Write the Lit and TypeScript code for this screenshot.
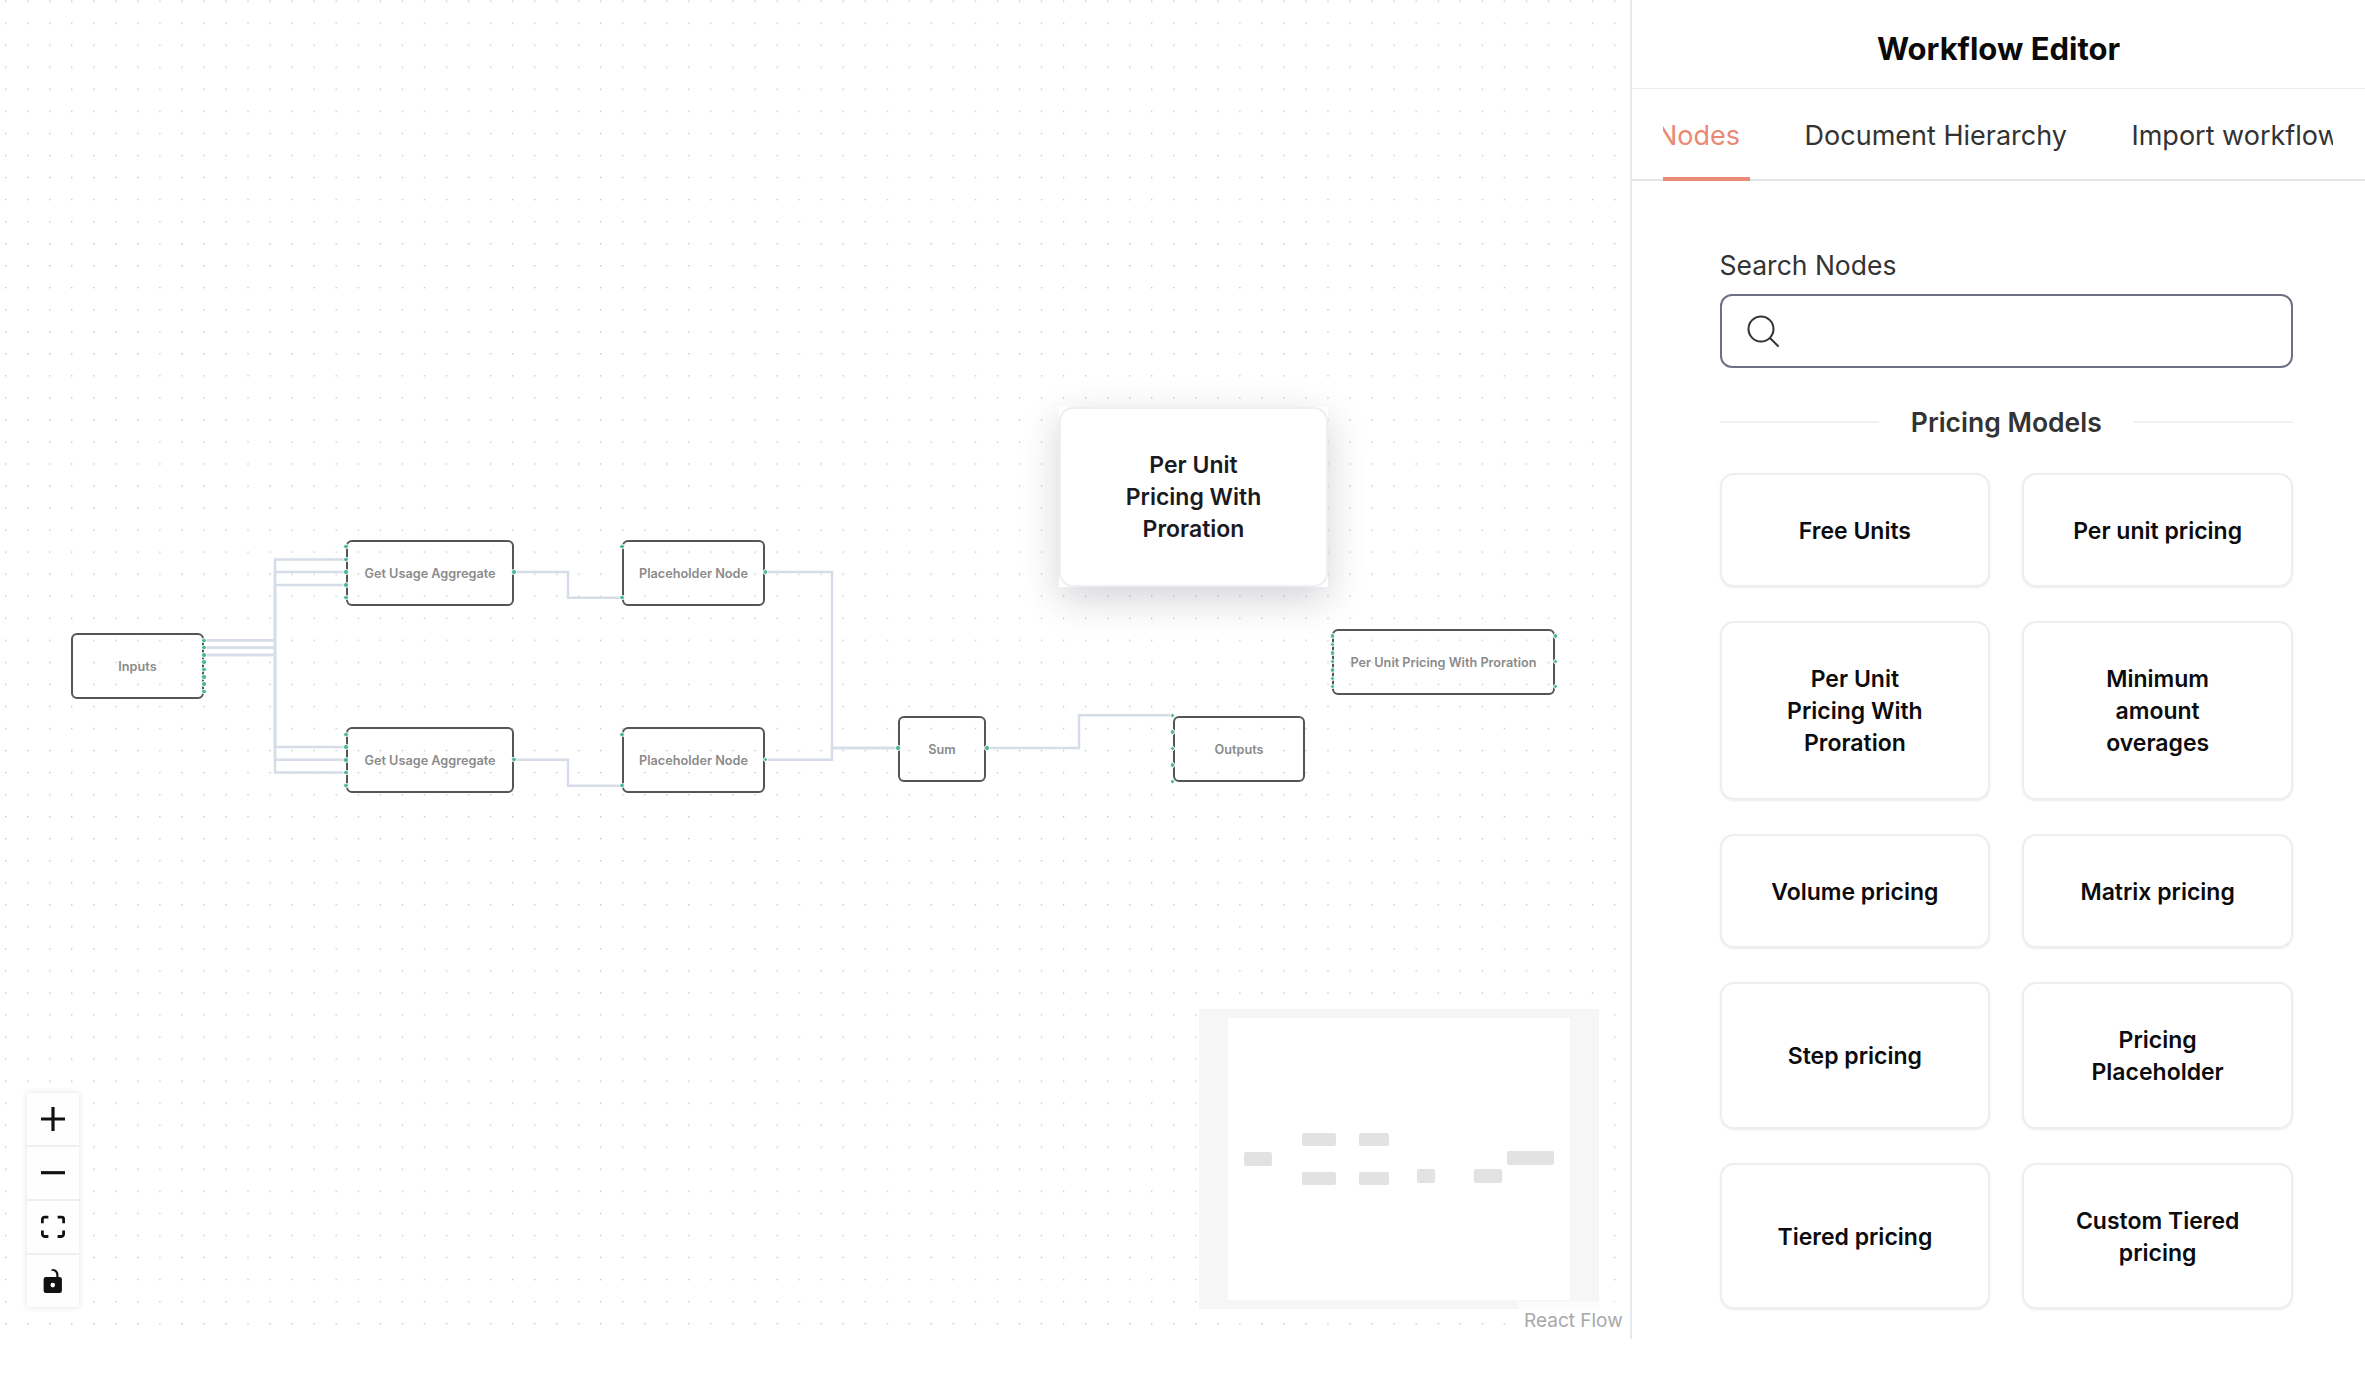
import { LitElement, html, css, svg } from "lit";
import { customElement } from "lit/decorators.js";

type N = { label: string; x: number; y: number; w: number; h: number; handles: [number, number][]; mini: [number, number, number, number] };

const range = (start: number, step: number, n: number) => Array.from({ length: n }, (_, i) => start + i * step);
const column = (x: number, ys: number[]) => ys.map((y) => [x, y] as [number, number]);

const NODES: N[] = [
  { label: "Inputs", x: 71, y: 633, w: 133, h: 66, handles: column(204, range(640.3, 7.3, 8)), mini: [1244, 1152, 28, 14] },
  { label: "Get Usage Aggregate", x: 346, y: 540, w: 168, h: 66, handles: [...column(346, range(546.7, 12.75, 5)), [514, 572]], mini: [1302, 1133, 34, 13] },
  { label: "Placeholder Node", x: 622, y: 540, w: 143, h: 66, handles: [[622, 546.7], [622, 597.7], [765.5, 572]], mini: [1359, 1133, 30, 13] },
  { label: "Get Usage Aggregate", x: 346, y: 727, w: 168, h: 66, handles: [...column(346, range(734.3, 12.75, 5)), [514, 759.7]], mini: [1302, 1172, 34, 13] },
  { label: "Placeholder Node", x: 622, y: 727, w: 143, h: 66, handles: [[622, 734.7], [622, 785.7], [765.5, 759.7]], mini: [1359, 1172, 30, 13] },
  { label: "Sum", x: 898, y: 716, w: 88, h: 66, handles: [[898, 748], [987, 748]], mini: [1417, 1169, 18, 14] },
  { label: "Outputs", x: 1173, y: 716, w: 132, h: 66, handles: column(1172.5, range(715.3, 16.6, 5)), mini: [1474, 1169, 28, 14] },
  { label: "Per Unit Pricing With Proration", x: 1332, y: 629, w: 223, h: 66, handles: [...column(1332.5, range(636, 8.45, 7)), ...column(1555.5, [636, 661.7, 686.7])], mini: [1507, 1151, 47, 14] },
];

const EDGES = [
  "M204 640.3H275V572H346", "M204 647.7H275V559.5H346", "M204 655H275V585H346",
  "M204 640.3H275V747H346", "M204 647.7H275V759.7H346", "M204 655H275V772.4H346",
  "M514 572H568V597.7H622", "M514 759.7H568V785.7H622",
  "M765 572H832V748H898", "M765 759.7H832V748H898",
  "M987 748H1079V715.3H1172",
];

const CARDS = [
  ["Free Units"], ["Per unit pricing"],
  ["Per Unit", "Pricing With", "Proration"], ["Minimum", "amount", "overages"],
  ["Volume pricing"], ["Matrix pricing"],
  ["Step pricing"], ["Pricing", "Placeholder"],
  ["Tiered pricing"], ["Custom Tiered", "pricing"],
];

const lines = (parts: string[]) => parts.map((p, i) => (i ? html`<br />${p}` : p));

@customElement("app-root")
export class AppRoot extends LitElement {
  static styles = css`
    :host { display: block; font-family: Inter, "Liberation Sans", sans-serif; background: #fff; height: 1399px; overflow: hidden; }
    .app { display: flex; height: 1339px; }
    .canvas { position: relative; width: 1630px; flex: none; overflow: hidden; background: #fff; }
    .layer { position: absolute; left: 0; top: 0; width: 100%; height: 100%; }
    .edge { fill: none; stroke: #d6dde8; stroke-width: 2.5; }
    .node { position: absolute; box-sizing: border-box; display: flex; align-items: center; justify-content: center; border: 2px solid #555; border-radius: 6px; font-size: 12.7px; font-weight: 600; color: #8b8b8b; white-space: nowrap; }
    .handle { position: absolute; width: 3.5px; height: 3.5px; margin: -2.75px 0 0 -2.75px; box-sizing: content-box; border: 1px solid #fff; border-radius: 50%; background: #4fb795; }
    .ghost { position: absolute; left: 1059px; top: 407px; width: 269px; height: 180px; box-sizing: border-box; background: #fff; box-shadow: 0 12px 36px rgba(40, 40, 60, 0.2); }
    .ghost-in { width: 100%; height: 100%; box-sizing: border-box; border: 2px solid #eeeef3; border-radius: 14px; display: flex; align-items: center; justify-content: center; text-align: center; font-size: 23px; line-height: 32px; font-weight: 600; color: #1b1b1f; }
    .controls { position: absolute; left: 27px; top: 1093px; width: 52px; box-shadow: 0 0 6px rgba(0, 0, 0, 0.12); background: #fefefe; }
    .ctrl { height: 52px; display: flex; align-items: center; justify-content: center; border-bottom: 2px solid #eee; box-sizing: content-box; }
    .ctrl:last-child { border-bottom: none; }
    .ctrl svg { width: 24px; height: 24px; fill: #111; }
    .minimap { position: absolute; left: 1199px; top: 1009px; width: 400px; height: 300px; background: #f6f6f6; }
    .viewport { position: absolute; left: 29px; top: 9px; width: 342px; height: 282px; background: #fff; }
    .mini { position: absolute; background: #e2e2e2; border-radius: 2px; }
    .attr { position: absolute; left: 1518px; top: 1301px; width: 112px; height: 38px; box-sizing: border-box; padding-left: 6px; background: rgba(255, 255, 255, 0.6); color: #a8a8a8; font-size: 19px; line-height: 40px; }
    .panel { flex: 1; min-width: 0; border-left: 2px solid #e9e9f0; color: #333; }
    .title { height: 79px; padding-top: 9px; box-sizing: content-box; border-bottom: 1.5px solid #eceef1; display: flex; align-items: center; justify-content: center; font-size: 31px; font-weight: 700; color: #0a0a0a; }
    .tabbar { height: 90px; border-bottom: 2px solid #e1e4e9; padding: 0 32px 0 31px; box-sizing: content-box; }
    .tabclip { overflow: hidden; height: 92px; }
    .tabs { display: flex; gap: 44.5px; margin-left: -16px; height: 100%; white-space: nowrap; }
    .tab { flex: none; box-sizing: border-box; padding: 0 10px; height: 92px; display: flex; align-items: center; font-size: 27px; color: #333; }
    .tab.on { color: #ea8873; border-bottom: 4px solid #e98b76; padding-top: 4px; }
    .body { padding: 67px 72px 0 87.5px; }
    .label { font-size: 26.5px; line-height: 34px; color: #333; margin-bottom: 11.5px; }
    .search { height: 74px; box-sizing: border-box; border: 2px solid #6e7186; border-radius: 12px; display: flex; align-items: center; padding-left: 24px; }
    .search svg { width: 34px; height: 34px; fill: none; stroke: #333; stroke-width: 2; stroke-linecap: round; }
    .sep { display: flex; align-items: center; gap: 32px; margin: 36px 0 33px; height: 36px; font-size: 26.5px; font-weight: 600; color: #333; white-space: nowrap; }
    .sep::before, .sep::after { content: ""; flex: 1; height: 2px; background: #f1f1f2; }
    .grid { display: grid; grid-template-columns: 1fr 1fr; gap: 34px 32px; }
    .card { box-sizing: border-box; border: 2px solid #ededf2; border-radius: 14px; padding: 40.25px 10px 38.25px; display: flex; align-items: center; justify-content: center; text-align: center; font-size: 23px; line-height: 32px; font-weight: 600; color: #0c0c0e; box-shadow: 0 1px 2px rgba(60, 60, 90, 0.1); }
  `;

  render() {
    return html`
      <div class="app">
        <div class="canvas">
          <svg class="layer">
            <defs>
              <pattern id="dots" x="5" y="0.5" width="22.04" height="22.04" patternUnits="userSpaceOnUse">
                <circle cx="0.7" cy="0.7" r="0.65" fill="#adadb3"></circle>
              </pattern>
            </defs>
            <rect width="100%" height="100%" fill="url(#dots)"></rect>
            ${EDGES.map((d) => svg`<path class="edge" d=${d}></path>`)}
          </svg>
          ${NODES.map(
            (n) => html`<div class="node" style="left:${n.x}px;top:${n.y}px;width:${n.w}px;height:${n.h}px">${n.label}</div>`
          )}
          ${NODES.flatMap((n) => n.handles).map(
            ([x, y]) => html`<div class="handle" style="left:${x}px;top:${y}px"></div>`
          )}
          <div class="ghost"><div class="ghost-in"><span>Per Unit<br />Pricing With<br />Proration</span></div></div>
          <div class="controls">
            <div class="ctrl"><svg viewBox="0 0 32 32"><path d="M32 18.133H18.133V32h-4.266V18.133H0v-4.266h13.867V0h4.266v13.867H32z"></path></svg></div>
            <div class="ctrl"><svg viewBox="0 0 32 5"><path d="M0 0h32v4.2H0z"></path></svg></div>
            <div class="ctrl"><svg viewBox="0 0 32 30"><path d="M3.692 4.63c0-.53.4-.938.939-.938h5.215V0H4.708C2.13 0 0 2.054 0 4.63v5.216h3.692V4.631zM27.354 0h-5.2v3.692h5.17c.53 0 .984.4.984.939v5.215H32V4.631A4.624 4.624 0 0027.354 0zm.954 24.83c0 .532-.4.94-.939.94h-5.215v3.768h5.215c2.577 0 4.631-2.13 4.631-4.707v-5.139h-3.692v5.139zm-23.677.94c-.531 0-.939-.4-.939-.94v-5.138H0v5.139c0 2.577 2.13 4.707 4.708 4.707h5.138V25.77H4.631z"></path></svg></div>
            <div class="ctrl"><svg viewBox="0 0 25 32"><path d="M21.333 10.667H19.81V7.619C19.81 3.429 16.38 0 12.19 0c-4.114 1.828-1.37 2.133.305 2.438 1.676.305 4.42 2.59 4.42 5.181v3.048H3.047A3.056 3.056 0 000 13.714v15.238A3.056 3.056 0 003.048 32h18.285a3.056 3.056 0 003.048-3.048V13.714a3.056 3.056 0 00-3.048-3.047zM12.19 24.533a3.056 3.056 0 01-3.047-3.047 3.056 3.056 0 013.047-3.048 3.056 3.056 0 013.048 3.048 3.056 3.056 0 01-3.048 3.047z"></path></svg></div>
          </div>
          <div class="minimap">
            <div class="viewport"></div>
            ${NODES.map(
              (n) => html`<div class="mini" style="left:${n.mini[0] - 1199}px;top:${n.mini[1] - 1009}px;width:${n.mini[2]}px;height:${n.mini[3]}px"></div>`
            )}
          </div>
          <div class="attr">React Flow</div>
        </div>
        <div class="panel">
          <div class="title">Workflow Editor</div>
          <div class="tabbar">
            <div class="tabclip">
              <div class="tabs">
                <div class="tab on">Nodes</div>
                <div class="tab">Document Hierarchy</div>
                <div class="tab">Import workflow</div>
              </div>
            </div>
          </div>
          <div class="body">
            <div class="label">Search Nodes</div>
            <div class="search">
              <svg viewBox="0 0 34 34"><circle cx="15" cy="15" r="12.5"></circle><path d="M24.5 24.5L32 32"></path></svg>
            </div>
            <div class="sep">Pricing Models</div>
            <div class="grid">
              ${CARDS.map((c) => html`<div class="card"><span>${lines(c)}</span></div>`)}
            </div>
          </div>
        </div>
      </div>
    `;
  }
}
